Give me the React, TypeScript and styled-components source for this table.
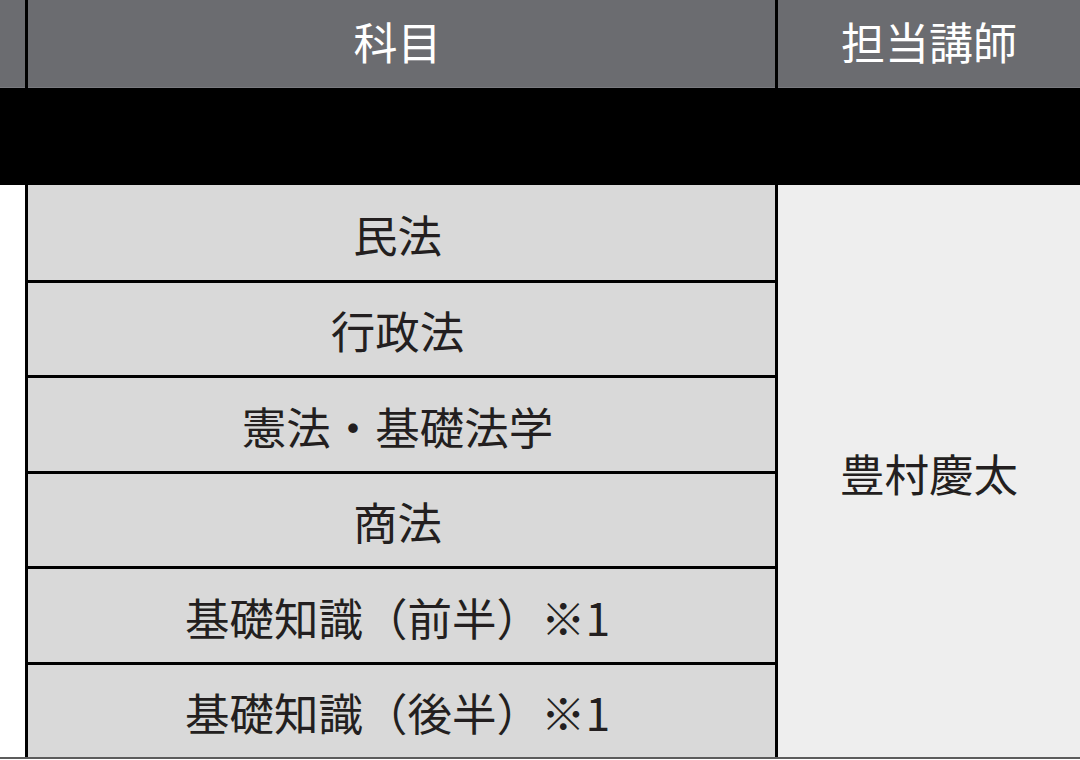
import React from "react";
import styled, { createGlobalStyle } from "styled-components";

const Global = createGlobalStyle`
  html, body { margin: 0; padding: 0; background: #ffffff; }
  body { font-family: "Noto Sans CJK JP", "Noto Sans", sans-serif; }
`;

const Table = styled.div`
  width: 1080px;
  display: grid;
  grid-template-columns: 25px 747px 1fr;
  grid-template-rows: 88px 97px 572px;
  column-gap: 3px;
  background: #000;
  border-bottom: 2px solid #5c5c5c;
`;

const HeadCell = styled.div<{ $shift?: number }>`
  background: #6b6c70;
  color: #ffffff;
  font-size: 44px;
  line-height: 1;
  display: flex;
  align-items: center;
  justify-content: center;
  padding-bottom: 6px;
  padding-right: ${(p) => p.$shift ?? 0}px;
  box-sizing: border-box;
  box-shadow: inset 0 -1px 0 #7a7b80;
`;

const Band = styled.div`
  grid-column: 1 / -1;
  background: #000;
`;

const Blank = styled.div`
  background: #ffffff;
`;

const SubjectList = styled.div`
  display: flex;
  flex-direction: column;
  gap: 3px;
  background: #000;
`;

const Subject = styled.div<{ $first?: boolean }>`
  flex: ${(p) => (p.$first ? "0 0 95px" : "1 1 0")};
  background: #d9d9d9;
  color: #231f20;
  font-size: 44.5px;
  line-height: 1;
  display: flex;
  align-items: center;
  justify-content: center;
  padding-top: 3px;
  padding-right: 8px;
  box-sizing: border-box;
`;

const Teacher = styled.div`
  background: #eeeeee;
  color: #231f20;
  font-size: 44.5px;
  line-height: 1;
  display: flex;
  align-items: center;
  justify-content: center;
  padding-top: 4px;
`;

const subjects = [
  "民法",
  "行政法",
  "憲法・基礎法学",
  "商法",
  "基礎知識（前半）※1",
  "基礎知識（後半）※1",
];

export default function App() {
  return (
    <>
      <Global />
      <Table>
        <HeadCell />
        <HeadCell $shift={8}>科目</HeadCell>
        <HeadCell>担当講師</HeadCell>
        <Band />
        <Blank />
        <SubjectList>
          {subjects.map((s, i) => (
            <Subject key={s} $first={i === 0}>
              {s}
            </Subject>
          ))}
        </SubjectList>
        <Teacher>豊村慶太</Teacher>
      </Table>
    </>
  );
}
